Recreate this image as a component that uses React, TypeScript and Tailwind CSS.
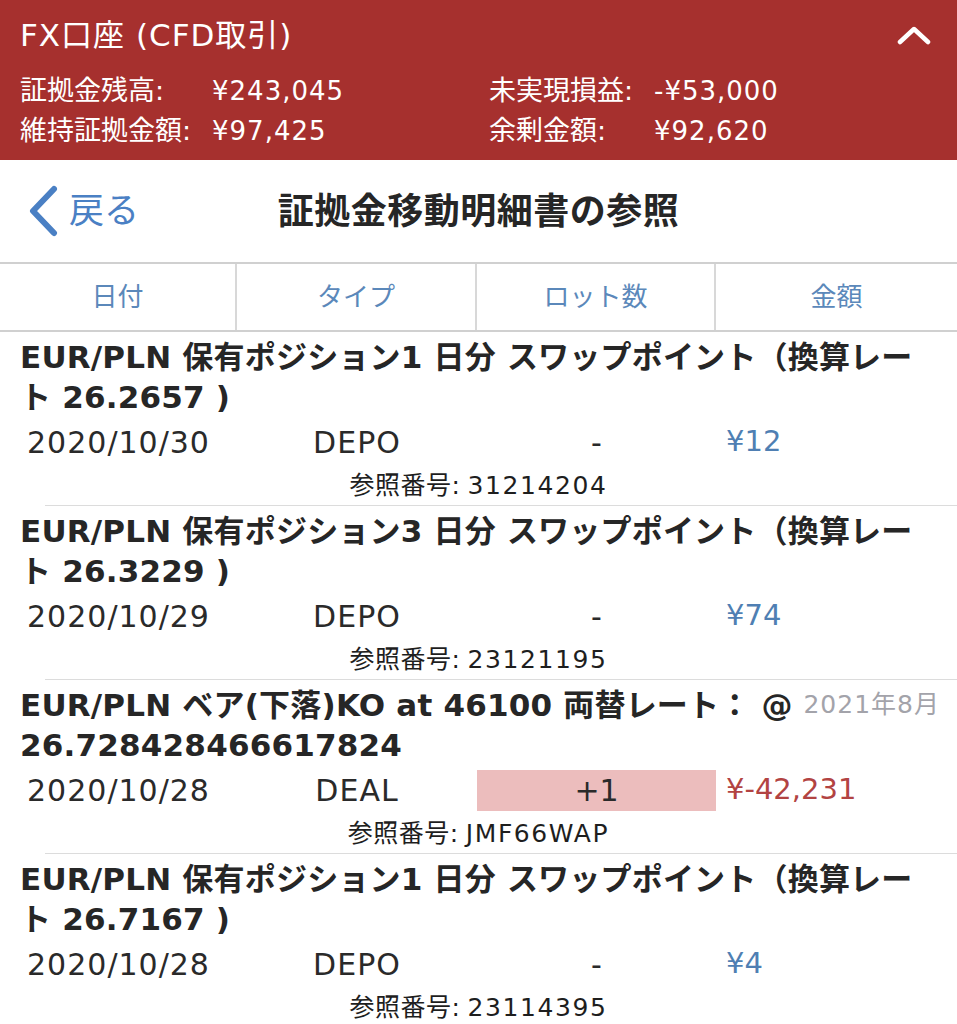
import React from "react";

const FONT = { fontFamily: '"DejaVu Sans", "Noto Sans CJK JP", "Noto Sans", sans-serif' };

type Row = {
  l1: string;
  l2: string;
  date: string;
  type: string;
  lot: string;
  amount: string;
  neg?: boolean;
  ref: string;
  stamp?: string;
};

const rows: Row[] = [
  {
    l1: "EUR/PLN 保有ポジション1 日分 スワップポイント（換算レー",
    l2: "ト 26.2657 )",
    date: "2020/10/30",
    type: "DEPO",
    lot: "-",
    amount: "¥12",
    ref: "31214204",
  },
  {
    l1: "EUR/PLN 保有ポジション3 日分 スワップポイント（換算レー",
    l2: "ト 26.3229 )",
    date: "2020/10/29",
    type: "DEPO",
    lot: "-",
    amount: "¥74",
    ref: "23121195",
  },
  {
    l1: "EUR/PLN ベア(下落)KO at 46100 両替レート： @",
    l2: "26.728428466617824",
    date: "2020/10/28",
    type: "DEAL",
    lot: "+1",
    amount: "¥-42,231",
    neg: true,
    ref: "JMF66WAP",
    stamp: "2021年8月",
  },
  {
    l1: "EUR/PLN 保有ポジション1 日分 スワップポイント（換算レー",
    l2: "ト 26.7167 )",
    date: "2020/10/28",
    type: "DEPO",
    lot: "-",
    amount: "¥4",
    ref: "23114395",
  },
];

function RowItem({ r }: { r: Row }) {
  return (
    <div className="relative">
      <div className="pt-[5px] pl-[20px] text-[31px] leading-[40px] font-semibold tracking-[0.2px] text-[#262626] whitespace-nowrap">
        <div>{r.l1}</div>
        <div>{r.l2}</div>
      </div>
      {r.stamp && (
        <div className="absolute right-[17px] top-[5px] text-[25px] leading-[40px] tracking-[1px] text-[#a3a3aa]">
          {r.stamp}
        </div>
      )}
      <div className="grid grid-cols-[237px_240px_239px_1fr] h-[50px] items-center text-[30px] text-[#2a2a2a]">
        <div className="text-center tracking-[1px]">{r.date}</div>
        <div className="text-center tracking-[1px]">{r.type}</div>
        <div className="flex justify-center">
          {r.neg ? (
            <div className="w-full h-[41px] bg-[#ecbdbd] flex items-center justify-center">
              {r.lot}
            </div>
          ) : (
            <span>{r.lot}</span>
          )}
        </div>
        <div className={`pl-[10px] text-[29px] ${r.neg ? "text-[#b24342]" : "text-[#4f7fb3]"}`}>
          {r.amount}
        </div>
      </div>
      <div className="h-[38px] flex items-center justify-center text-[25px] text-[#1e1e1e]">
        <span className="tracking-[0.5px]">参照番号:</span>
        <span className="ml-[7px] tracking-[1.6px]">{r.ref}</span>
      </div>
      <div className="ml-[45px] border-b border-[#dcdcdc]" />
    </div>
  );
}

export default function App() {
  return (
    <div className="w-[957px] h-[1024px] overflow-hidden bg-white" style={FONT}>
      {/* Red account header */}
      <div className="bg-[#a6302e] text-white h-[160px] px-[20px]">
        <div className="h-[68px] pt-[2px] flex items-center justify-between">
          <div className="text-[31px] tracking-[1px]">FX口座 (CFD取引)</div>
          <svg width="34" height="20" viewBox="0 0 34 20" className="mr-[6px]">
            <path d="M3 17 L17 4 L31 17" fill="none" stroke="white" strokeWidth="4.5" strokeLinecap="round" strokeLinejoin="round" />
          </svg>
        </div>
        <div className="pt-[3px] grid grid-cols-[192px_277px_165px_1fr] text-[27px]">
          <div className="h-[40px] flex items-center">証拠金残高:</div>
          <div className="h-[40px] flex items-center text-[26px] tracking-[1px]">¥243,045</div>
          <div className="h-[40px] flex items-center">未実現損益:</div>
          <div className="h-[40px] flex items-center text-[26px] tracking-[1px]">-¥53,000</div>
          <div className="h-[40px] flex items-center">維持証拠金額:</div>
          <div className="h-[40px] flex items-center text-[26px] tracking-[1px]">¥97,425</div>
          <div className="h-[40px] flex items-center">余剰金額:</div>
          <div className="h-[40px] flex items-center text-[26px] tracking-[1px]">¥92,620</div>
        </div>
      </div>

      {/* Nav bar */}
      <div className="h-[102px] grid grid-cols-[1fr_auto_1fr] items-center">
        <div className="flex items-center pl-[28px] text-[#4a80c4]">
          <svg width="32" height="52" viewBox="0 0 32 52">
            <path d="M26 4 L5 26 L26 48" fill="none" stroke="#4a80c4" strokeWidth="6" strokeLinecap="round" strokeLinejoin="round" />
          </svg>
          <span className="ml-[9px] text-[35px]">戻る</span>
        </div>
        <div className="text-[36px] font-bold tracking-[0.5px] text-[#262626] pt-[2px]">証拠金移動明細書の参照</div>
        <div />
      </div>

      {/* Column headers */}
      <div className="grid grid-cols-[237px_240px_239px_1fr] h-[70px] border-t-2 border-b-2 border-[#d0d0d0] text-[26px] text-[#5b88ba]">
        <div className="flex items-center justify-center border-r-2 border-[#d8d8d8]">日付</div>
        <div className="flex items-center justify-center border-r-2 border-[#d8d8d8]">タイプ</div>
        <div className="flex items-center justify-center border-r-2 border-[#d8d8d8]">ロット数</div>
        <div className="flex items-center justify-center">金額</div>
      </div>

      {rows.map((r, i) => (
        <RowItem key={i} r={r} />
      ))}
    </div>
  );
}
